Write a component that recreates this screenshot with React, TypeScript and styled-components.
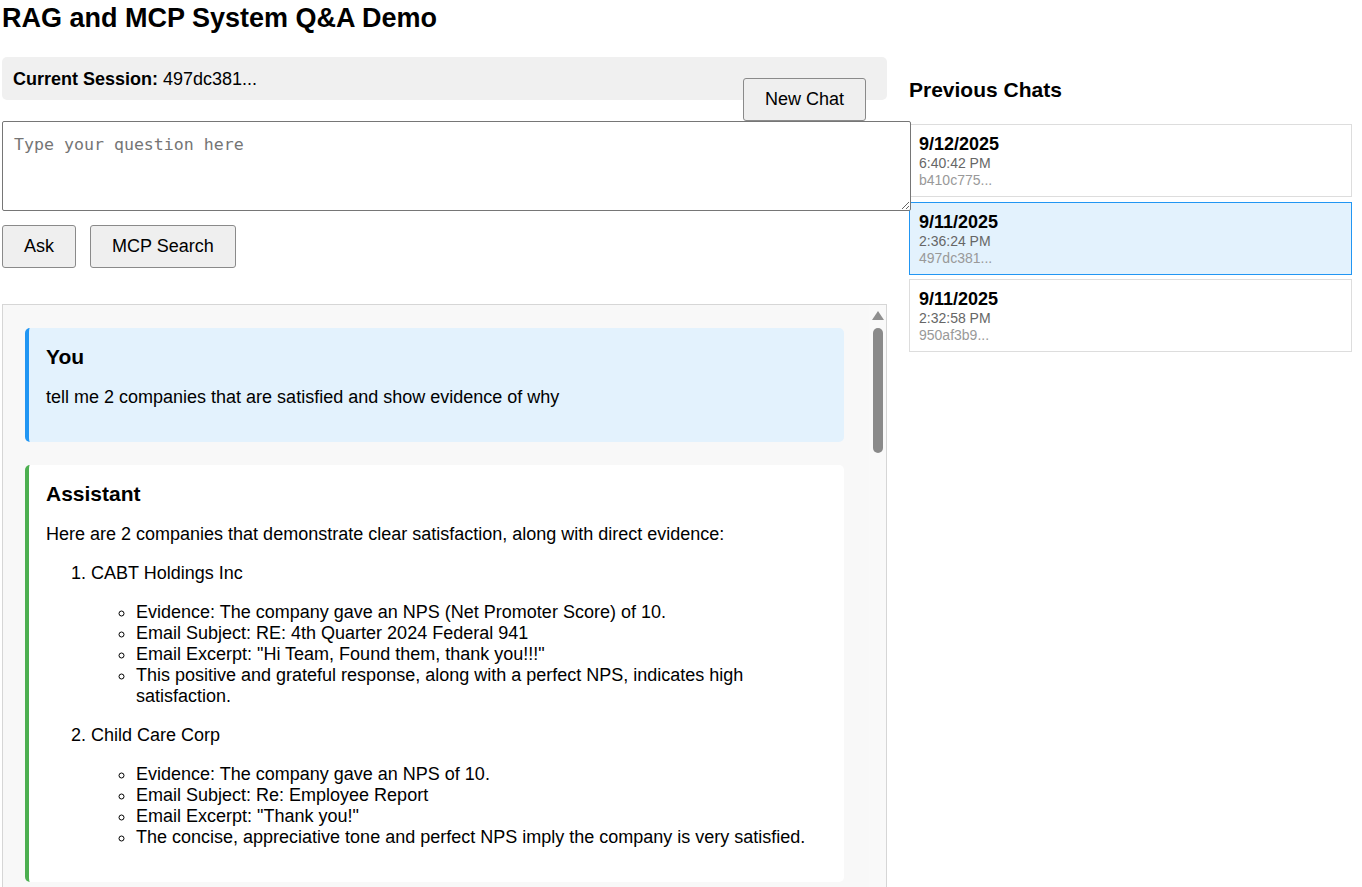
import React from "react";
import styled, { createGlobalStyle } from "styled-components";

const GlobalStyle = createGlobalStyle`
  html, body {
    margin: 0;
    padding: 0;
    overflow: hidden;
    background: #ffffff;
  }
  body {
    font-family: "Liberation Sans", Arial, sans-serif;
    font-size: 18px;
    color: #000;
  }
`;

const Page = styled.div`
  padding: 0 10px 0 2px;
`;

const Title = styled.h1`
  font-size: 27px;
  font-weight: bold;
  margin: 3px 0 23px;
`;

const Columns = styled.div`
  display: grid;
  grid-template-columns: 885px 443px;
  column-gap: 22px;
  align-items: start;
`;

const LeftColumn = styled.div`
  display: flex;
  flex-direction: column;
  align-items: flex-start;
  min-width: 0;
`;

const SessionBar = styled.div`
  box-sizing: border-box;
  width: 100%;
  height: 43px;
  display: flex;
  justify-content: space-between;
  align-items: flex-start;
  padding: 12px 21px 0 11px;
  background: #f0f0f0;
  border-radius: 5px;
  margin-bottom: 21px;
`;

const SessionText = styled.div`
  line-height: 21px;
  strong {
    font-weight: bold;
  }
`;

const Button = styled.button`
  font-family: "Liberation Sans", Arial, sans-serif;
  font-size: 18px;
  line-height: 21px;
  padding: 10px 21px;
  background: #efefef;
  color: #000;
  border: 1px solid #8a8a8a;
  border-radius: 3px;
  cursor: pointer;
  flex-shrink: 0;
`;

const NewChatButton = styled(Button)`
  margin-top: 9px;
`;

const QuestionInput = styled.textarea`
  width: 885px;
  height: 66px;
  padding: 13px 11px 9px;
  margin: 0;
  border: 1px solid #767676;
  border-radius: 2px;
  font-family: "DejaVu Sans Mono", "Liberation Mono", monospace;
  font-size: 16.6px;
  display: block;
  position: relative;
  z-index: 1;
  background: #fff;
  &::placeholder {
    color: #757575;
  }
`;

const ButtonRow = styled.div`
  display: flex;
  gap: 14px;
  margin-top: 14px;
`;

const ChatFrame = styled.div`
  box-sizing: border-box;
  width: 100%;
  height: 600px;
  margin-top: 36px;
  background: #f8f8f8;
  border: 1px solid #d6d6d6;
  display: flex;
`;

const ChatScroll = styled.div`
  flex: 1;
  min-width: 0;
  overflow: hidden;
  padding: 23px 25px 23px 22px;
  display: flex;
  flex-direction: column;
  gap: 23px;
`;

const ScrollTrack = styled.div`
  width: 17px;
  flex-shrink: 0;
  display: flex;
  flex-direction: column;
  align-items: center;
  padding-top: 6px;
  background: #f9f9f9;
`;

const ScrollArrow = styled.div`
  width: 0;
  height: 0;
  border-left: 6px solid transparent;
  border-right: 6px solid transparent;
  border-bottom: 9px solid #8f8f8f;
`;

const ScrollThumb = styled.div`
  width: 10px;
  height: 125px;
  margin-top: 8px;
  border-radius: 5px;
  background: #8a8a8a;
`;

const MessageCard = styled.div<{ $role: "user" | "assistant" }>`
  flex-shrink: 0;
  background: ${(p) => (p.$role === "user" ? "#e3f2fd" : "#ffffff")};
  border-left: 4px solid ${(p) => (p.$role === "user" ? "#2196f3" : "#4caf50")};
  border-radius: 5px;
  padding: 17px 16px 16px 17px;
  line-height: normal;

  h3 {
    font-size: 21px;
    font-weight: bold;
    margin: 0;
  }
  p {
    margin: 18px 0;
  }
  ol {
    margin: 18px 0;
    padding-left: 45px;
  }
  ol > li > p {
    margin: 18px 0;
  }
  ul {
    list-style: circle;
    margin: 0;
    padding-left: 45px;
  }
`;

const RightColumn = styled.div`
  display: flex;
  flex-direction: column;
`;

const SideHeading = styled.h3`
  font-size: 21px;
  font-weight: bold;
  margin: 21px 0 22px;
`;

const ChatList = styled.div`
  display: flex;
  flex-direction: column;
  gap: 4.5px;
`;

const ChatItem = styled.div<{ $active?: boolean }>`
  padding: 9px 9px 8px;
  border: 1px solid ${(p) => (p.$active ? "#2196f3" : "#dddddd")};
  background: ${(p) => (p.$active ? "#e3f2fd" : "#ffffff")};
  cursor: pointer;
`;

const ChatDate = styled.div`
  font-weight: bold;
  font-size: 18px;
`;

const ChatTime = styled.div`
  font-size: 14px;
  line-height: 17px;
  color: #666666;
`;

const ChatId = styled.div`
  font-size: 14px;
  line-height: 16px;
  color: #999999;
`;

const chats = [
  { date: "9/12/2025", time: "6:40:42 PM", id: "b410c775..." },
  { date: "9/11/2025", time: "2:36:24 PM", id: "497dc381...", active: true },
  { date: "9/11/2025", time: "2:32:58 PM", id: "950af3b9..." },
];

export default function App() {
  return (
    <>
      <GlobalStyle />
      <Page>
        <Title>RAG and MCP System Q&amp;A Demo</Title>
        <Columns>
          <LeftColumn>
            <SessionBar>
              <SessionText>
                <strong>Current Session:</strong> 497dc381...
              </SessionText>
              <NewChatButton>New Chat</NewChatButton>
            </SessionBar>
            <QuestionInput placeholder="Type your question here" />
            <ButtonRow>
              <Button>Ask</Button>
              <Button>MCP Search</Button>
            </ButtonRow>
            <ChatFrame>
              <ChatScroll>
                <MessageCard $role="user">
                  <h3>You</h3>
                  <p>tell me 2 companies that are satisfied and show evidence of why</p>
                </MessageCard>
                <MessageCard $role="assistant">
                  <h3>Assistant</h3>
                  <p>Here are 2 companies that demonstrate clear satisfaction, along with direct evidence:</p>
                  <ol>
                    <li>
                      <p>CABT Holdings Inc</p>
                      <ul>
                        <li>Evidence: The company gave an NPS (Net Promoter Score) of 10.</li>
                        <li>Email Subject: RE: 4th Quarter 2024 Federal 941</li>
                        <li>Email Excerpt: "Hi Team, Found them, thank you!!!"</li>
                        <li>This positive and grateful response, along with a perfect NPS, indicates high satisfaction.</li>
                      </ul>
                    </li>
                    <li>
                      <p>Child Care Corp</p>
                      <ul>
                        <li>Evidence: The company gave an NPS of 10.</li>
                        <li>Email Subject: Re: Employee Report</li>
                        <li>Email Excerpt: "Thank you!"</li>
                        <li>The concise, appreciative tone and perfect NPS imply the company is very satisfied.</li>
                      </ul>
                    </li>
                  </ol>
                </MessageCard>
              </ChatScroll>
              <ScrollTrack>
                <ScrollArrow />
                <ScrollThumb />
              </ScrollTrack>
            </ChatFrame>
          </LeftColumn>
          <RightColumn>
            <SideHeading>Previous Chats</SideHeading>
            <ChatList>
              {chats.map((c) => (
                <ChatItem key={c.id} $active={c.active}>
                  <ChatDate>{c.date}</ChatDate>
                  <ChatTime>{c.time}</ChatTime>
                  <ChatId>{c.id}</ChatId>
                </ChatItem>
              ))}
            </ChatList>
          </RightColumn>
        </Columns>
      </Page>
    </>
  );
}
